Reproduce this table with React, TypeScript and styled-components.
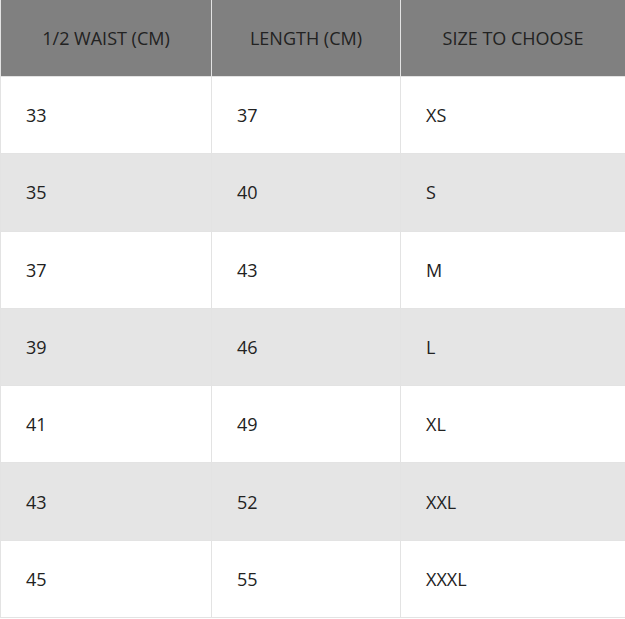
import React from "react";
import styled, { createGlobalStyle } from "styled-components";

const Global = createGlobalStyle`
  html, body { margin: 0; padding: 0; background: #fff; }
  body { font-family: "Open Sans", Lato, sans-serif; }
`;

const Table = styled.table`
  width: 625px;
  border-collapse: collapse;
  table-layout: fixed;
  font-family: "Open Sans", Lato, sans-serif;
  font-size: 18px;
  color: #222;
`;

const Col = styled.col<{ $w: number }>`
  width: ${(p) => p.$w}px;
`;

const HeadCell = styled.th`
  height: 76px;
  padding: 0 6px;
  background: #808080;
  border: 1px solid #e3e3e3;
  border-top: none;
  font-weight: 400;
  text-align: center;
  color: #222;
`;

const Row = styled.tr<{ $striped: boolean }>`
  background: ${(p) => (p.$striped ? "#e5e5e5" : "#fff")};
`;

const Cell = styled.td`
  height: 76.3px;
  padding: 0 25px;
  border: 1px solid #e3e3e3;
  text-align: left;
`;

const rows: [string, string, string][] = [
  ["33", "37", "XS"],
  ["35", "40", "S"],
  ["37", "43", "M"],
  ["39", "46", "L"],
  ["41", "49", "XL"],
  ["43", "52", "XXL"],
  ["45", "55", "XXXL"],
];

export default function App() {
  return (
    <>
      <Global />
      <Table>
        <colgroup>
          <Col $w={211} />
          <Col $w={189} />
          <Col $w={225} />
        </colgroup>
        <thead>
          <tr>
            <HeadCell>1/2 WAIST (CM)</HeadCell>
            <HeadCell>LENGTH (CM)</HeadCell>
            <HeadCell>SIZE TO CHOOSE</HeadCell>
          </tr>
        </thead>
        <tbody>
          {rows.map((r, i) => (
            <Row key={i} $striped={i % 2 === 1}>
              {r.map((c, j) => (
                <Cell key={j}>{c}</Cell>
              ))}
            </Row>
          ))}
        </tbody>
      </Table>
    </>
  );
}
